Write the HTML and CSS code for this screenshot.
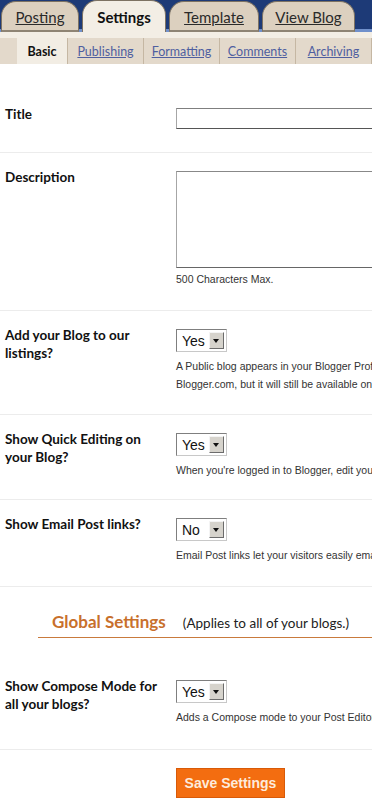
FILE: index.html
```html
<!DOCTYPE html>
<html lang="en">
<head>
    <meta charset="UTF-8">
    <meta name="viewport" content="width=device-width, initial-scale=1.0">
    <title>Settings - Blogger</title>
    <link rel="stylesheet" href="styles.css">
</head>
<body>
    <!-- Main tabs -->
    <div class="tabs">
        <a class="tab" href="#">Posting</a>
        <span class="tab active">Settings</span>
        <a class="tab" href="#">Template</a>
        <a class="tab" href="#">View Blog</a>
    </div>
    <div class="tab-strip"></div>
    <!-- Sub tabs -->
    <ul class="subnav">
        <li class="current">Basic</li>
        <li><a href="#">Publishing</a></li>
        <li><a href="#">Formatting</a></li>
        <li><a href="#">Comments</a></li>
        <li><a href="#">Archiving</a></li>
    </ul>

    <form class="settings">
        <div class="row first">
            <div class="label">Title</div>
            <div class="field">
                <input type="text" class="text-input">
            </div>
        </div>
        <div class="row">
            <div class="label">Description</div>
            <div class="field">
                <textarea class="text-area"></textarea>
                <p class="hint">500 Characters Max.</p>
            </div>
        </div>
        <div class="row listings">
            <div class="label">Add your Blog to our listings?</div>
            <div class="field">
                <label class="select">
                    <select><option>Yes</option><option>No</option></select>
                    <span class="select-arrow"></span>
                </label>
                <p class="hint">A Public blog appears in your Blogger Profile and may appear on<br>Blogger.com, but it will still be available on the web.</p>
            </div>
        </div>
        <div class="row quick">
            <div class="label">Show Quick Editing on your Blog?</div>
            <div class="field">
                <label class="select">
                    <select><option>Yes</option><option>No</option></select>
                    <span class="select-arrow"></span>
                </label>
                <p class="hint">When you're logged in to Blogger, edit your posts from your blog.</p>
            </div>
        </div>
        <div class="row">
            <div class="label">Show Email Post links?</div>
            <div class="field">
                <label class="select">
                    <select><option>No</option><option>Yes</option></select>
                    <span class="select-arrow"></span>
                </label>
                <p class="hint">Email Post links let your visitors easily email your posts to friends.</p>
            </div>
        </div>

        <div class="global">
            <h2 class="global-title">Global Settings <span>(Applies to all of your blogs.)</span></h2>
        </div>
        <div class="row compose">
            <div class="label">Show Compose Mode for all your blogs?</div>
            <div class="field">
                <label class="select">
                    <select><option>Yes</option><option>No</option></select>
                    <span class="select-arrow"></span>
                </label>
                <p class="hint">Adds a Compose mode to your Post Editor</p>
            </div>
        </div>
        <div class="row actions">
            <div class="label"></div>
            <div class="field">
                <button type="button" class="save-btn">Save Settings</button>
            </div>
        </div>
    </form>
</body>
</html>
```

FILE: styles.css
```css
* {
    margin: 0;
    padding: 0;
    box-sizing: border-box;
}

html, body {
    overflow-x: hidden;
}

body {
    font-family: Lato, "Open Sans", sans-serif;
    background: #fff;
    color: #222;
    width: 372px;
}

/* Top tabs */
.tabs {
    display: flex;
    align-items: flex-end;
    gap: 3px;
    height: 32px;
    padding-left: 1px;
    background: #1d3a77;
    border-bottom: 3px solid #7090cb;
}
.tab {
    display: block;
    height: 31px;
    margin-bottom: -3px;
    padding-top: 6px;
    border: 1px solid #7d7262;
    border-bottom: 2px solid #8e8474;
    border-radius: 15px 15px 0 0;
    background: #dcd0bf;
    color: #2a2a2a;
    font-size: 15px;
    text-align: center;
    text-decoration: underline;
}
.tab:nth-child(1) { width: 78px; }
.tab:nth-child(2) { width: 84px; }
.tab:nth-child(3) { width: 90px; }
.tab:nth-child(4) { width: 93px; }
.tab.active {
    height: 32px;
    padding-top: 7px;
    border-bottom: none;
    background: #f3eee5;
    font-weight: 700;
    text-decoration: none;
    color: #111;
}
.tab-strip {
    height: 6px;
    background: #f3eee5;
}

/* Sub tabs */
.subnav {
    display: flex;
    list-style: none;
    height: 26px;
    padding-left: 17px;
    background: #e3d9cb;
    font-size: 12.5px;
}
.subnav li {
    display: flex;
    align-items: center;
    justify-content: center;
    border-right: 1px solid #c5b7a3;
    width: 79px;
}
.subnav li.current {
    width: 53px;
    background: #f2ede4;
    font-weight: 700;
    color: #111;
}
.subnav a {
    color: #4f5fa0;
}

/* Settings form */
.settings {
    padding-top: 26px;
}
.row {
    display: grid;
    grid-template-columns: 176px 260px;
    padding: 18px 0 22px;
    border-top: 1px solid #ececec;
}
.row.first {
    border-top: none;
    padding-bottom: 23px;
}
.row.listings {
    padding-bottom: 21px;
}
.row.quick {
    padding-bottom: 20px;
}
.label {
    padding-left: 5px;
    padding-right: 16px;
    margin-top: -3px;
    font-size: 13.5px;
    font-weight: 700;
    line-height: 18px;
    color: #111;
}
.text-input {
    display: block;
    width: 240px;
    height: 21px;
    border: 1px solid #a6a6a6;
    border-top-color: #7f7f7f;
    border-bottom-color: #555;
}
.text-area {
    display: block;
    width: 240px;
    height: 97px;
    border: 1px solid #a6a6a6;
    border-top-color: #888;
    border-bottom-color: #666;
    resize: none;
}
.hint {
    margin-top: 5px;
    font-family: "Liberation Sans", Arial, sans-serif;
    font-size: 10.5px;
    line-height: 18px;
    color: #333;
    white-space: nowrap;
}
.text-area + .hint {
    margin-top: 2px;
}

/* Fake classic dropdown */
.select {
    position: relative;
    display: block;
    width: 51px;
    height: 23px;
}
.select select {
    appearance: none;
    -webkit-appearance: none;
    width: 100%;
    height: 100%;
    padding-left: 5px;
    border: 1px solid #7f7f7f;
    border-right-color: #c8c8c8;
    border-bottom-color: #c8c8c8;
    border-radius: 0;
    background: #fff;
    font-family: "Liberation Sans", Arial, sans-serif;
    font-size: 14px;
    color: #111;
}
.select-arrow {
    position: absolute;
    top: 3px;
    right: 3px;
    width: 15px;
    height: 17px;
    background: #d6d3cc;
    border: 1px solid #f4f4f4;
    border-right-color: #6c6c6c;
    border-bottom-color: #6c6c6c;
    pointer-events: none;
}
.select-arrow::after {
    content: '';
    position: absolute;
    top: 6px;
    left: 3px;
    border-left: 3.5px solid transparent;
    border-right: 3.5px solid transparent;
    border-top: 4px solid #111;
}

/* Global settings header */
.global {
    padding: 24px 0 0 38px;
    border-top: 1px solid #ececec;
}
.global-title {
    padding: 0 0 3px 14px;
    border-bottom: 1px solid #c97a3c;
    font-size: 17px;
    font-weight: 700;
    line-height: 22px;
    color: #c8702c;
}
.global-title span {
    margin-left: 13px;
    font-size: 13.5px;
    font-weight: 400;
    color: #222;
}
.row.compose {
    border-top: none;
    padding-top: 42px;
    padding-bottom: 23px;
}

.row.actions {
    padding-top: 18px;
}
.save-btn {
    width: 109px;
    height: 30px;
    border: 1px solid #d85a08;
    background: #f36d10;
    color: #fdebdc;
    font-family: "Liberation Sans", Arial, sans-serif;
    font-size: 14px;
    font-weight: 700;
    cursor: pointer;
}
```
